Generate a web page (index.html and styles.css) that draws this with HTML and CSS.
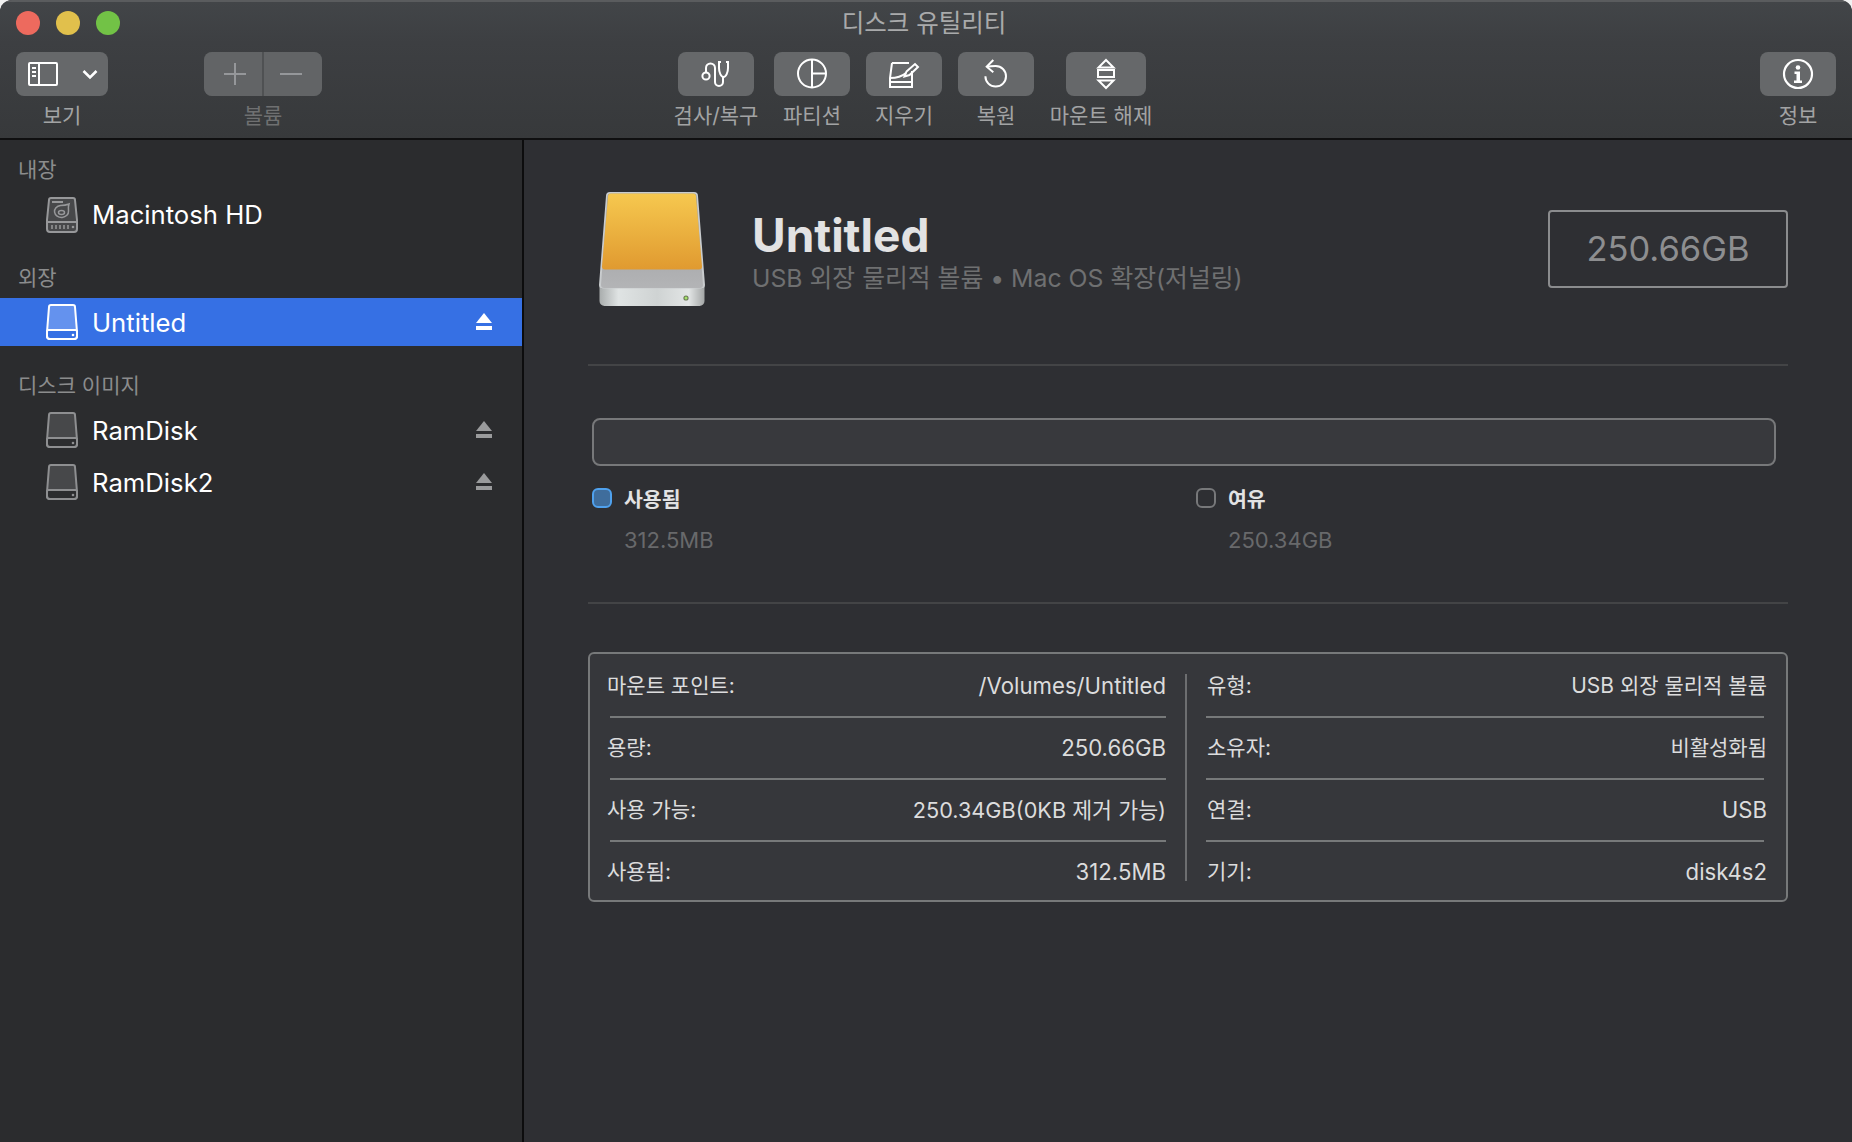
FILE: index.html
```html
<!DOCTYPE html>
<html lang="ko">
<head>
<meta charset="utf-8">
<title>디스크 유틸리티</title>
<link rel="stylesheet" href="styles.css">
</head>
<body>
<div class="window">
  <header class="toolbar">
    <div class="titlebar">
      <div class="lights"><span class="light red"></span><span class="light yellow"></span><span class="light green"></span></div>
      <div class="title">디스크 유틸리티</div>
      <div></div>
    </div>
    <div class="tools">
      <div class="tool tool-view">
        <div class="btn btn-view">
          <svg class="ic-panel" viewBox="0 0 30 24"><rect x="1" y="1" width="28" height="22" rx="1" fill="none" stroke="#fff" stroke-width="2"/><path d="M11 1v22" stroke="#fff" stroke-width="2"/><path d="M4 6h4M4 10h4M4 14h4" stroke="#fff" stroke-width="2"/></svg>
          <svg class="ic-chev" viewBox="0 0 16 11"><path d="M1.500 2l6.500 6.500L14.500 2" fill="none" stroke="#fff" stroke-width="2.600"/></svg>
        </div>
        <div class="label">보기</div>
      </div>
      <div class="tool tool-volume">
        <div class="btn btn-volume">
          <div class="seg seg-l"><svg class="ic-pm" viewBox="0 0 24 24"><path d="M12 1v22M1 12h22" stroke="#95979a" stroke-width="2"/></svg></div>
          <div class="seg seg-r"><svg class="ic-pm" viewBox="0 0 24 24"><path d="M1 12h22" stroke="#95979a" stroke-width="2"/></svg></div>
        </div>
        <div class="label dim">볼륨</div>
      </div>
      <div class="tool tool-std tool-aid">
        <div class="btn btn-std">
          <svg class="ic" viewBox="0 0 32 32"><g fill="none" stroke="#fff" stroke-width="2"><circle cx="6" cy="18" r="3.600"/><path d="M6 14.400V10a4.500 4.500 0 0 1 9 0v14a4 4 0 0 0 8 0v-5"/><path d="M21 4h-2v6c0 4.500 2 9 4.500 9s4.500-4.500 4.500-9V4h-2"/></g></svg>
        </div>
        <div class="label">검사/복구</div>
      </div>
      <div class="tool tool-std tool-part">
        <div class="btn btn-std">
          <svg class="ic" viewBox="0 0 32 32"><g fill="none" stroke="#fff" stroke-width="2"><circle cx="16" cy="15.500" r="14"/><path d="M16 1.500v28M16 15.500h14"/></g></svg>
        </div>
        <div class="label">파티션</div>
      </div>
      <div class="tool tool-std tool-erase">
        <div class="btn btn-std">
          <svg class="ic" viewBox="0 0 32 32"><g fill="none" stroke="#fff" stroke-width="2"><path d="M4 5h17"/><path d="M4 5L2 20v4"/><path d="M2 20c6 0 12-1.500 16-5"/><path d="M18.500 13.500L27 6l3 3-8.500 8-5 1.500z"/><rect x="2" y="24" width="22" height="5"/><path d="M24 13v11"/></g></svg>
        </div>
        <div class="label">지우기</div>
      </div>
      <div class="tool tool-std tool-restore">
        <div class="btn btn-std">
          <svg class="ic" viewBox="0 0 32 32"><g fill="none" stroke="#fff" stroke-width="2"><path d="M7.500 8.700c2-.5 5-.7 8.200-.7a10.300 10.300 0 1 1-10.300 10.300"/><path d="M13.300 2L6.700 8.700l6.600 5.600"/></g></svg>
        </div>
        <div class="label">복원</div>
      </div>
      <div class="tool tool-unmount">
        <div class="btn btn-unmount">
          <svg class="ic" viewBox="0 0 32 32"><g fill="none" stroke="#fff" stroke-width="2"><path d="M16 2l7.500 7.500h-15z"/><rect x="8" y="12" width="16" height="7"/><path d="M16 30l-7.500-7.500h15z"/></g></svg>
        </div>
        <div class="label">마운트 해제</div>
      </div>
      <div class="tool tool-info">
        <div class="btn btn-std">
          <svg class="ic" viewBox="0 0 32 32"><circle cx="16" cy="16" r="14" fill="none" stroke="#fff" stroke-width="2.200"/><circle cx="16" cy="9.500" r="2.300" fill="#fff"/><path d="M12.500 13.500h5.500v9h2v2.500h-8v-2.500h2.500v-6.500h-2z" fill="#fff"/></svg>
        </div>
        <div class="label">정보</div>
      </div>
    </div>
  </header>

  <div class="body">
    <aside class="sidebar">
      <div class="sec">내장</div>
      <div class="row row-mac">
        <svg class="drive" viewBox="0 0 32 36">
          <path d="M5 1h22a2 2 0 0 1 2 2l2 20v9a3 3 0 0 1-3 3H4a3 3 0 0 1-3-3v-9L3 3a2 2 0 0 1 2-2z" fill="#47484a" stroke="#97989a" stroke-width="2"/>
          <path d="M1 25h30" stroke="#97989a" stroke-width="2"/>
          <path d="M6 5h11" stroke="#97989a" stroke-width="2"/>
          <path d="M23 7c-1 3-1 4-.5 7a7 6 0 1 1-8-5.500c3 0 6-.5 8.500-1.500z" fill="none" stroke="#97989a" stroke-width="1.500"/>
          <ellipse cx="15.500" cy="15.500" rx="3" ry="2" fill="none" stroke="#97989a" stroke-width="1.500"/>
          <path d="M6 28v4M10 28v4M14 28v4M18 28v4M22 28v4" stroke="#97989a" stroke-width="1.500"/>
          <circle cx="27" cy="30" r="1.300" fill="#97989a"/>
        </svg>
        <span class="name">Macintosh HD</span>
      </div>

      <div class="sec sec-ext">외장</div>
      <div class="row selected">
        <svg class="drive" viewBox="0 0 32 36">
          <path d="M5 1h22a2 2 0 0 1 2 2l2 25v4a3 3 0 0 1-3 3H4a3 3 0 0 1-3-3v-4L3 3a2 2 0 0 1 2-2z" fill="#6492ee" stroke="#fff" stroke-width="2"/>
          <path d="M1 27.500a1.500 1.500 0 0 1 1.500-1.500h27a1.500 1.500 0 0 1 1.500 1.500V32a3 3 0 0 1-3 3H4a3 3 0 0 1-3-3z" fill="#3670e4" stroke="#fff" stroke-width="2"/>
          <circle cx="27" cy="31" r="1.300" fill="#fff"/>
        </svg>
        <span class="name">Untitled</span>
        <svg class="eject" viewBox="0 0 16 18"><path d="M8 0l8 10H0z" fill="#fff"/><path d="M0 13h16v4H0z" fill="#fff"/></svg>
      </div>

      <div class="sec sec-img">디스크 이미지</div>
      <div class="row">
        <svg class="drive" viewBox="0 0 32 36">
          <path d="M5 1h22a2 2 0 0 1 2 2l2 25v4a3 3 0 0 1-3 3H4a3 3 0 0 1-3-3v-4L3 3a2 2 0 0 1 2-2z" fill="#47484a" stroke="#8e8f91" stroke-width="2"/>
          <path d="M1 27.500a1.500 1.500 0 0 1 1.500-1.500h27a1.500 1.500 0 0 1 1.500 1.500V32a3 3 0 0 1-3 3H4a3 3 0 0 1-3-3z" fill="#2c2d2f" stroke="#8e8f91" stroke-width="2"/>
          <circle cx="27" cy="31" r="1.300" fill="#8e8f91"/>
        </svg>
        <span class="name">RamDisk</span>
        <svg class="eject" viewBox="0 0 16 18"><path d="M8 0l8 10H0z" fill="#9a9b9c"/><path d="M0 13h16v4H0z" fill="#9a9b9c"/></svg>
      </div>
      <div class="row row-gap">
        <svg class="drive" viewBox="0 0 32 36">
          <path d="M5 1h22a2 2 0 0 1 2 2l2 25v4a3 3 0 0 1-3 3H4a3 3 0 0 1-3-3v-4L3 3a2 2 0 0 1 2-2z" fill="#47484a" stroke="#8e8f91" stroke-width="2"/>
          <path d="M1 27.500a1.500 1.500 0 0 1 1.500-1.500h27a1.500 1.500 0 0 1 1.500 1.500V32a3 3 0 0 1-3 3H4a3 3 0 0 1-3-3z" fill="#2c2d2f" stroke="#8e8f91" stroke-width="2"/>
          <circle cx="27" cy="31" r="1.300" fill="#8e8f91"/>
        </svg>
        <span class="name">RamDisk2</span>
        <svg class="eject" viewBox="0 0 16 18"><path d="M8 0l8 10H0z" fill="#9a9b9c"/><path d="M0 13h16v4H0z" fill="#9a9b9c"/></svg>
      </div>
    </aside>

    <main class="main">
      <section class="head">
        <svg class="bigdrive" viewBox="0 0 108 118">
          <defs>
            <linearGradient id="og" x1="0" y1="0" x2="0" y2="1"><stop offset="0" stop-color="#f6c84f"/><stop offset="1" stop-color="#e09a30"/></linearGradient>
            <linearGradient id="gg" x1="0" y1="0" x2="0" y2="1"><stop offset="0" stop-color="#97989a"/><stop offset="1" stop-color="#b3b4b6"/></linearGradient>
            <linearGradient id="fg" x1="0" y1="0" x2="1" y2="0"><stop offset="0" stop-color="#a9adad"/><stop offset=".18" stop-color="#dfe3e3"/><stop offset=".55" stop-color="#cfd3d3"/><stop offset=".85" stop-color="#e2e5e5"/><stop offset="1" stop-color="#a3a6a6"/></linearGradient>
          </defs>
          <path d="M12 2h84a4 4 0 0 1 4 4l7 89a4 4 0 0 1-4 4H5a4 4 0 0 1-4-4L8 6a4 4 0 0 1 4-4z" fill="#c9ccce"/>
          <path d="M12.500 3.500h83a3 3 0 0 1 3 3L105 95a3 3 0 0 1-3 3H6a3 3 0 0 1-3-3L9.500 6.500a3 3 0 0 1 3-3z" fill="url(#gg)"/>
          <path d="M13 3.500h82a3 3 0 0 1 3 3l6 70a3 3 0 0 1-3 3H7a3 3 0 0 1-3-3l6-70a3 3 0 0 1 3-3z" fill="url(#og)"/>
          <path d="M1.500 97c1 1 2 1.500 3.500 1.500h98c1.500 0 2.500-.5 3.500-1.500v14a5 5 0 0 1-5 5H6.500a5 5 0 0 1-5-5z" fill="url(#fg)"/>
          <circle cx="88" cy="108" r="2.600" fill="#6c7a57"/>
          <circle cx="88" cy="108" r="1.500" fill="#a4e36a"/>
        </svg>
        <div class="head-text">
          <div class="vol-title">Untitled</div>
          <div class="vol-sub">USB 외장 물리적 볼륨 • Mac OS 확장(저널링)</div>
        </div>
        <div class="capacity">250.66GB</div>
      </section>

      <section class="usage">
        <div class="bar"></div>
        <div class="legend">
          <div class="leg">
            <div class="leg-top"><span class="swatch used"></span><span class="leg-name">사용됨</span></div>
            <div class="leg-val">312.5MB</div>
          </div>
          <div class="leg">
            <div class="leg-top"><span class="swatch"></span><span class="leg-name">여유</span></div>
            <div class="leg-val">250.34GB</div>
          </div>
        </div>
      </section>

      <section class="info">
        <div class="col col-l">
          <div class="irow"><span class="k">마운트 포인트:</span><span>/Volumes/Untitled</span></div>
          <div class="irow"><span class="k">용량:</span><span>250.66GB</span></div>
          <div class="irow"><span class="k">사용 가능:</span><span class="mid">250.34GB(0KB 제거 가능)</span></div>
          <div class="irow"><span class="k">사용됨:</span><span>312.5MB</span></div>
        </div>
        <div class="vline"></div>
        <div class="col col-r">
          <div class="irow"><span class="k">유형:</span><span class="v ko">USB 외장 물리적 볼륨</span></div>
          <div class="irow"><span class="k">소유자:</span><span class="v ko">비활성화됨</span></div>
          <div class="irow"><span class="k">연결:</span><span class="v">USB</span></div>
          <div class="irow"><span class="k">기기:</span><span class="v">disk4s2</span></div>
        </div>
      </section>
    </main>
  </div>
</div>
</body>
</html>
```

FILE: styles.css
```css
* { box-sizing: border-box; }
html, body { margin: 0; padding: 0; height: 100%; background: #f1f1f1; overflow: hidden; }
body { font-family: Inter, "Noto Sans CJK KR", sans-serif; }

.window {
  width: 1852px;
  height: 1142px;
  display: flex;
  flex-direction: column;
  border-radius: 12px 12px 0 0;
  overflow: hidden;
  background: #2e2f33;
}

/* toolbar */
.toolbar {
  flex: none;
  height: 140px;
  background: linear-gradient(#424548 0, #3d3f42 30%, #37393b 100%);
  border-top: 2px solid #5a5c5e;
  border-bottom: 2px solid #0f0f10;
}
.titlebar {
  height: 42px;
  margin-top: -2px;
  display: grid;
  grid-template-columns: 1fr auto 1fr;
  align-items: center;
}
.lights { display: flex; gap: 16px; padding-left: 16px; padding-top: 2px; }
.light { width: 24px; height: 24px; border-radius: 50%; }
.red { background: #ed6a5e; }
.yellow { background: #e1c04c; }
.green { background: #72c246; }
.title { font-size: 24.5px; line-height: 42px; color: #a9aaab; margin-left: -4px; padding-top: 2px; }

.tools { display: flex; padding-top: 10px; }
.tool { display: flex; flex-direction: column; align-items: center; flex: none; }
.tool-std { width: 76px; }
.btn {
  height: 44px;
  border-radius: 8px;
  background: #66686a;
  display: flex;
  align-items: center;
  justify-content: center;
  flex: none;
}
.btn-std { width: 76px; }
.label {
  margin-top: 6px;
  font-size: 21px;
  line-height: 28px;
  color: #a2a3a4;
  white-space: nowrap;
}
.dim { color: #6f7071; }

.tool-view { margin-left: 16px; }
.btn-view { width: 92px; justify-content: flex-start; padding-left: 12px; }
.ic-panel { width: 30px; height: 24px; }
.ic-chev { width: 16px; height: 11px; margin-left: 24px; margin-top: 1px; }

.tool-volume { margin-left: 96px; }
.btn-volume { width: 118px; display: grid; grid-template-columns: 58px 1fr; gap: 2px; background: #4f5153; overflow: hidden; }
.seg { background: #626466; height: 100%; display: flex; align-items: center; justify-content: center; }
.seg-l { padding-left: 4px; }
.seg-r { padding-right: 4px; }
.ic-pm { width: 24px; height: 24px; }

.tool-aid { margin-left: 356px; }
.tool-part { margin-left: 20px; }
.tool-erase { margin-left: 16px; }
.tool-restore { margin-left: 16px; }
.tool-unmount { margin-left: 17px; width: 100px; }
.btn-unmount { width: 80px; margin-left: 10px; }
.tool-info { margin-left: auto; margin-right: 16px; }
.ic { width: 32px; height: 32px; }

/* body */
.body { flex: 1; display: flex; min-height: 0; }
.sidebar {
  flex: none;
  width: 524px;
  background: #2b2c2e;
  border-right: 2px solid #0c0c0d;
  padding-top: 9px;
}
.sec {
  height: 42px;
  line-height: 42px;
  padding-left: 18px;
  font-size: 21px;
  color: #8b8c8d;
}
.sec-ext { margin-top: 17px; line-height: 44px; }
.sec-img { margin-top: 18px; line-height: 44px; }
.row {
  height: 48px;
  display: flex;
  align-items: center;
  padding-left: 46px;
  padding-right: 30px;
  color: #fff;
}
.row-gap { margin-top: 4px; }
.selected { background: #3670e4; }
.drive { width: 32px; height: 36px; flex: none; }
.name { margin-left: 14px; font-size: 25.7px; line-height: 48px; flex: 1; padding-top: 1px; }
.row-mac .name { padding-top: 0; }
.eject { width: 16px; height: 18px; flex: none; }

/* main */
.main { flex: 1; min-width: 0; padding: 0 64px 0 64px; }
.head {
  height: 226px;
  padding-top: 50px;
  border-bottom: 2px solid #434446;
  display: flex;
  align-items: flex-start;
  padding-left: 10px;
}
.bigdrive { width: 108px; height: 118px; flex: none; }
.head-text { margin-left: 46px; margin-top: 18px; flex: 1; }
.vol-title { font-size: 46px; font-weight: 700; line-height: 54px; color: #e2e2e3; }
.vol-sub { font-size: 24.8px; line-height: 32px; color: #6f7071; margin-top: 0; }
.capacity {
  width: 240px;
  height: 78px;
  margin-top: 20px;
  border: 2px solid #8b8c8e;
  border-radius: 4px;
  font-size: 34.5px;
  line-height: 74px;
  text-align: center;
  color: #8d8e90;
}

.usage {
  height: 238px;
  padding: 52px 12px 0 4px;
  border-bottom: 2px solid #434446;
}
.bar {
  height: 48px;
  border: 2px solid #77787a;
  border-radius: 8px;
  background: #38393d;
}
.legend { display: grid; grid-template-columns: 604px 1fr; margin-top: 20px; }
.leg-top { display: flex; align-items: center; height: 24px; }
.swatch {
  width: 20px;
  height: 20px;
  border: 2px solid #77787a;
  border-radius: 6px;
  flex: none;
}
.used { background: #3f6d9c; border-color: #4fa1ee; }
.leg-name { margin-left: 12px; font-size: 20.5px; font-weight: 700; color: #e2e2e3; }
.leg-val { margin: 18px 0 0 32px; font-size: 22px; line-height: 24px; color: #68696b; }

.info {
  margin-top: 48px;
  height: 250px;
  padding: 2px 22px 0 20px;
  background: #36373b;
  border: 2px solid #77797a;
  border-radius: 6px;
  display: grid;
  grid-template-columns: 556px 2px 1fr;
  column-gap: 19px;
  font-size: 22.2px;
  color: #dcdcdd;
}
.vline { background: #6d6e70; height: 207px; margin-top: 18px; }
.irow {
  height: 62px;
  line-height: 60px;
  display: flex;
  justify-content: space-between;
  border-bottom: 2px solid #77797a;
  white-space: nowrap;
}
.irow:last-child { height: 58px; border-bottom: 0; }
.k, .ko { font-size: 21px; }
.mid { font-size: 21.7px; }
.col-l .k { margin-left: -3px; }
.col-r .k { margin-left: 1px; }
.col-r .v { margin-right: -3px; }
```
